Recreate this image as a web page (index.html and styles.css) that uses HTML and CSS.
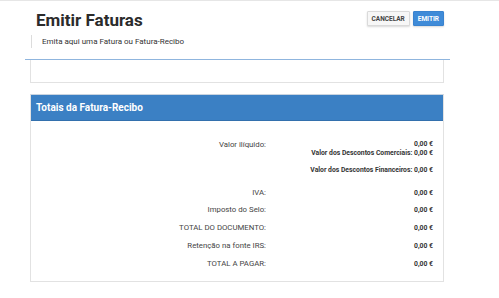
FILE: index.html
```html
<!DOCTYPE html>
<html>
<head>
<meta http-equiv="Content-Type" content="text/html; charset=utf-8"/>
<title>Emitir Faturas</title>
<link rel="stylesheet" href="styles.css">
</head>
<body>
<div class="topline"></div>

<div class="page">
  <div class="page-head">
    <div>
      <h1 class="title">Emitir Faturas</h1>
      <p class="subtitle">Emita aqui uma Fatura ou Fatura-Recibo</p>
    </div>
    <div class="actions">
      <button class="btn btn-default">Cancelar</button>
      <button class="btn btn-primary">Emitir</button>
    </div>
  </div>

  <div class="rule"></div>

  <div class="panel panel-empty"></div>

  <div class="panel panel-totals">
    <div class="panel-heading">Totais da Fatura-Recibo</div>
    <div class="panel-body">
      <div class="row row-first">
        <div class="label">Valor ilíquido:</div>
        <div class="value">
          <div>0,00 €</div>
          <div>Valor dos Descontos Comerciais: 0,00 €</div>
          <div class="spaced">Valor dos Descontos Financeiros: 0,00 €</div>
        </div>
      </div>
      <div class="row">
        <div class="label">IVA:</div>
        <div class="value">0,00 €</div>
      </div>
      <div class="row">
        <div class="label">Imposto do Selo:</div>
        <div class="value">0,00 €</div>
      </div>
      <div class="row">
        <div class="label">TOTAL DO DOCUMENTO:</div>
        <div class="value">0,00 €</div>
      </div>
      <div class="row">
        <div class="label">Retenção na fonte IRS:</div>
        <div class="value">0,00 €</div>
      </div>
      <div class="row">
        <div class="label">TOTAL A PAGAR:</div>
        <div class="value">0,00 €</div>
      </div>
    </div>
  </div>
</div>
</body>
</html>
```

FILE: styles.css
```css
body {
  margin: 0;
  font-family: Roboto, "Liberation Sans", sans-serif;
  background-color: white;
  color: #333;
}

.topline {
  height: 1px;
  background: #e6e6e6;
}

.page {
  margin-left: 25px;
  width: 425px;
}

.page-head {
  display: flex;
  justify-content: space-between;
  align-items: flex-start;
  padding: 9px 6px 0 5px;
}

.title {
  margin: 0;
  padding-left: 6px;
  font-size: 17px;
  line-height: 20px;
  font-weight: 700;
  color: #2b2b2b;
}

.subtitle {
  margin: 5px 0 0 1px;
  padding-left: 10px;
  border-left: 1px solid #dcdcdc;
  font-size: 8px;
  line-height: 13px;
  color: #333;
}

.actions {
  display: flex;
  gap: 3px;
  padding-top: 1px;
}

.btn {
  height: 15px;
  padding: 0 4px;
  font-family: Roboto, "Liberation Sans", sans-serif;
  font-size: 6.5px;
  font-weight: 700;
  text-transform: uppercase;
  border-radius: 1px;
  box-shadow: 0 1px 2px rgba(0, 0, 0, 0.15);
}

.btn-default {
  background: #f7f7f7;
  border: 1px solid #dadada;
  color: #444;
}

.btn-primary {
  background: #3f8bd8;
  border: 1px solid #3a83cf;
  color: white;
}

.rule {
  margin-top: 11px;
  height: 1px;
  background: #8fb5de;
}

.panel {
  margin: 0 6px 0 5px;
  border: 1px solid #e2e2e2;
  background: white;
}

.panel-empty {
  height: 22px;
  border-top: none;
}

.panel-totals {
  margin-top: 11px;
  border-top-color: #c9d4e0;
}

.panel-heading {
  height: 25px;
  line-height: 25px;
  padding-left: 5px;
  background: #3b80c4;
  border-bottom: 1px solid #3370ad;
  color: white;
  font-size: 10px;
  font-weight: 700;
}

.panel-body {
  padding: 19px 10px 12px;
}

.row {
  display: grid;
  grid-template-columns: 225px 1fr;
  line-height: 10px;
  margin-bottom: 7.8px;
}

.row:last-child {
  margin-bottom: 0;
}

.row-first {
  line-height: 9px;
  margin-bottom: 12.7px;
}

.label {
  text-align: right;
  font-size: 7.8px;
  color: #444;
}

.value {
  text-align: right;
  font-size: 6.8px;
  font-weight: 700;
  color: #333;
}

.spaced {
  margin-top: 8px;
}
```
